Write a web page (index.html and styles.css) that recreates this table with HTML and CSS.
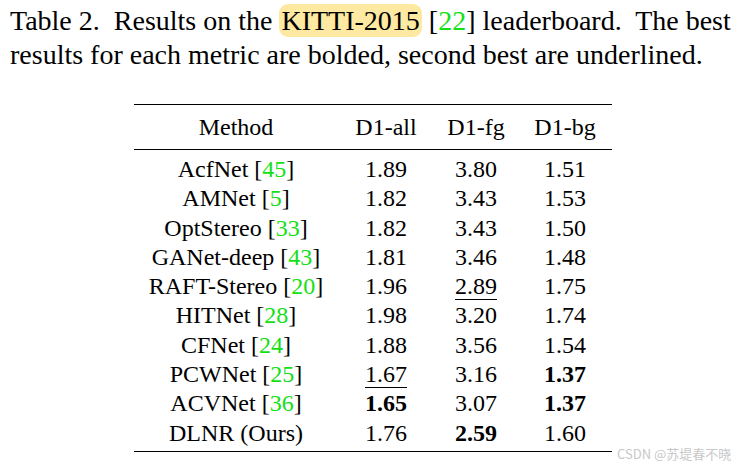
FILE: index.html
```html
<!DOCTYPE html>
<html>
<head>
<meta charset="utf-8">
<link rel="stylesheet" href="styles.css">
</head>
<body>
<div class="page">
  <p class="caption">Table 2.&nbsp; Results on the <span class="hl">KITTI-2015</span> [<span class="ref">22</span>] leaderboard.&nbsp; The best<br>results for each metric are bolded, second best are underlined.</p>
  <table class="results">
    <thead>
      <tr><th class="c-method">Method</th><th class="c-all">D1-all</th><th class="c-fg">D1-fg</th><th class="c-bg">D1-bg</th></tr>
    </thead>
    <tbody>
      <tr class="first"><td>AcfNet [<span class="ref">45</span>]</td><td>1.89</td><td>3.80</td><td>1.51</td></tr>
      <tr><td>AMNet [<span class="ref">5</span>]</td><td>1.82</td><td>3.43</td><td>1.53</td></tr>
      <tr><td>OptStereo [<span class="ref">33</span>]</td><td>1.82</td><td>3.43</td><td>1.50</td></tr>
      <tr><td>GANet-deep [<span class="ref">43</span>]</td><td>1.81</td><td>3.46</td><td>1.48</td></tr>
      <tr><td>RAFT-Stereo [<span class="ref">20</span>]</td><td>1.96</td><td><span class="ul">2.89</span></td><td>1.75</td></tr>
      <tr><td>HITNet [<span class="ref">28</span>]</td><td>1.98</td><td>3.20</td><td>1.74</td></tr>
      <tr><td>CFNet [<span class="ref">24</span>]</td><td>1.88</td><td>3.56</td><td>1.54</td></tr>
      <tr><td>PCWNet [<span class="ref">25</span>]</td><td><span class="ul">1.67</span></td><td>3.16</td><td><b>1.37</b></td></tr>
      <tr><td>ACVNet [<span class="ref">36</span>]</td><td><b>1.65</b></td><td>3.07</td><td><b>1.37</b></td></tr>
      <tr class="last"><td>DLNR (Ours)</td><td>1.76</td><td><b>2.59</b></td><td>1.60</td></tr>
    </tbody>
  </table>
  <div class="mark">CSDN @苏堤春不晓</div>
</div>
</body>
</html>
```
FILE: styles.css
```css
html, body {
  margin: 0;
  padding: 0;
  background: #fff;
}
.page {
  width: 743px;
  height: 468px;
  position: relative;
  font-family: "Liberation Serif", "Times New Roman", serif;
  color: #000;
  overflow: hidden;
}
.caption {
  margin: 0;
  padding: 4px 0 0 10px;
  font-size: 28px;
  line-height: 34px;
  white-space: nowrap;
}
.hl {
  background: #fde9a2;
  border-radius: 9px;
  padding: 1px 2px;
}
.ref {
  color: #14e014;
}
.results {
  margin: 32px 0 0 134px;
  border-collapse: collapse;
  font-size: 24px;
  border-top: 1.5px solid #000;
  border-bottom: 1.5px solid #000;
}
.results th {
  font-weight: normal;
  height: 44px;
  padding: 0;
  border-bottom: 1.5px solid #000;
  line-height: 44px;
}
.results td {
  padding: 0;
  text-align: center;
  line-height: 29.3px;
  white-space: nowrap;
}
.c-method { width: 204px; }
.c-all { width: 96px; }
.c-fg { width: 84px; }
.c-bg { width: 94px; }
.results tr.first td { padding-top: 5px; }
.results tr.last td { padding-bottom: 3px; }
.ul {
  display: inline-block;
  line-height: 24px;
  border-bottom: 1.5px solid #000;
  padding-bottom: 1px;
}
.mark {
  position: absolute;
  left: 617px;
  top: 444px;
  font-family: "Noto Sans CJK SC", "Noto Sans", sans-serif;
  font-size: 13px;
  color: #c8c8c8;
}
```
